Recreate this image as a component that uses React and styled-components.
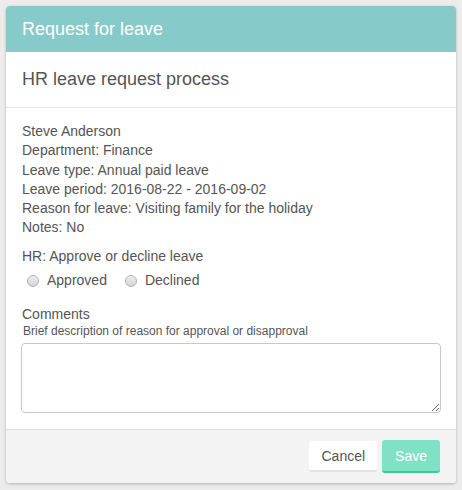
import React from "react";
import styled, { createGlobalStyle } from "styled-components";

const GlobalStyle = createGlobalStyle`
  html, body {
    margin: 0;
    padding: 0;
    background: #ececec;
    font-family: "Liberation Sans", Arial, sans-serif;
    color: #555;
  }
  * { box-sizing: border-box; }
`;

const Page = styled.div`
  padding: 6px;
`;

const Card = styled.div`
  width: 450px;
  background: #fff;
  border-radius: 4px;
  box-shadow: 0 1px 3px rgba(0, 0, 0, 0.25);
  overflow: hidden;
`;

const Header = styled.div`
  height: 46px;
  display: flex;
  align-items: center;
  padding: 0 16px;
  background: #86cbca;
  color: #fff;
  font-size: 18px;
`;

const SubHeader = styled.div`
  height: 56px;
  display: flex;
  align-items: center;
  padding: 0 16px;
  font-size: 18px;
  color: #555;
  border-bottom: 1px solid #e6e6e6;
`;

const Body = styled.div`
  padding: 14px 15px 16px 16px;
  font-size: 14px;
  line-height: 19.3px;
  color: #555;
`;

const Line = styled.div``;

const Section = styled.div`
  margin-top: ${({ $gap }) => $gap || 0}px;
`;

const RadioRow = styled.div`
  display: flex;
  align-items: center;
  gap: 18px;
  padding-left: 5px;
  height: 24px;
  margin-top: 3px;
`;

const RadioLabel = styled.label`
  display: flex;
  align-items: center;
  gap: 8px;
  font-size: 14px;
`;

const Radio = styled.span`
  width: 12px;
  height: 12px;
  border-radius: 50%;
  border: 1px solid #b4b4b4;
  background: linear-gradient(#ececec, #d6d6d6);
`;

const Hint = styled.div`
  font-size: 12px;
  line-height: 14px;
  padding-left: 1px;
`;

const TextArea = styled.textarea`
  display: block;
  width: 420px;
  height: 70px;
  margin: 5px 0 0 -1px;
  border: 1px solid #c8c8c8;
  border-radius: 4px;
  resize: vertical;
  font-family: inherit;
`;

const Footer = styled.div`
  height: 54px;
  display: flex;
  align-items: center;
  justify-content: flex-end;
  gap: 5px;
  padding: 0 16px 0 0;
  background: #f3f3f3;
  border-top: 1px solid #dedede;
`;

const Button = styled.button`
  height: ${({ $primary }) => ($primary ? 33 : 31)}px;
  padding: 0 ${({ $primary }) => ($primary ? 13 : 12)}px;
  border: none;
  border-radius: 3px;
  font-family: inherit;
  font-size: 14px;
  color: ${({ $primary }) => ($primary ? "#fff" : "#555")};
  background: ${({ $primary }) => ($primary ? "#80e1c4" : "#fff")};
  border-bottom: 2px solid ${({ $primary }) => ($primary ? "#3ccb9e" : "#e2e2e2")};
`;

export default function App() {
  return (
    <Page>
      <GlobalStyle />
      <Card>
        <Header>Request for leave</Header>
        <SubHeader>HR leave request process</SubHeader>
        <Body>
          <Line>Steve Anderson</Line>
          <Line>Department: Finance</Line>
          <Line>Leave type: Annual paid leave</Line>
          <Line>Leave period: 2016-08-22 - 2016-09-02</Line>
          <Line>Reason for leave: Visiting family for the holiday</Line>
          <Line>Notes: No</Line>
          <Section $gap={9}>
            <Line>HR: Approve or decline leave</Line>
            <RadioRow>
              <RadioLabel>
                <Radio />
                Approved
              </RadioLabel>
              <RadioLabel>
                <Radio />
                Declined
              </RadioLabel>
            </RadioRow>
          </Section>
          <Section $gap={12}>
            <Line>Comments</Line>
            <Hint>Brief description of reason for approval or disapproval</Hint>
            <TextArea />
          </Section>
        </Body>
        <Footer>
          <Button>Cancel</Button>
          <Button $primary>Save</Button>
        </Footer>
      </Card>
    </Page>
  );
}
